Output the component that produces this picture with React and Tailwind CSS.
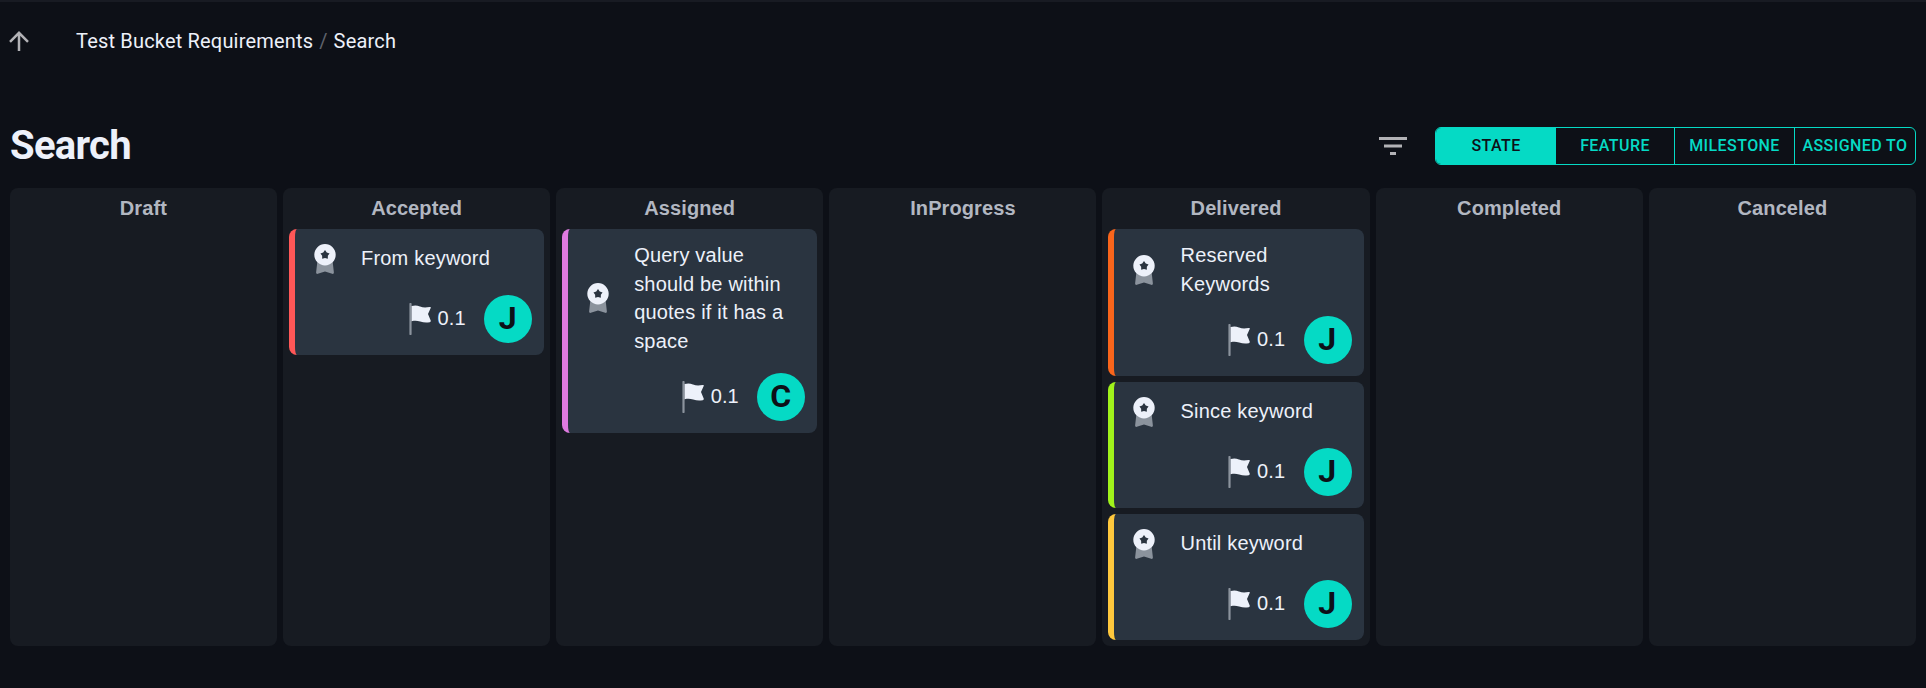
const COLUMNS = [
  { title: "Draft", cards: [] },
  { title: "Accepted", cards: [{ text: "From keyword", who: "J", border: "border-[#ff5757]" }] },
  { title: "Assigned", cards: [{ text: "Query value should be within quotes if it has a space", who: "C", border: "border-[#df7ae0]" }] },
  { title: "InProgress", cards: [] },
  {
    title: "Delivered",
    cards: [
      { text: "Reserved Keywords", who: "J", border: "border-[#f9651b]" },
      { text: "Since keyword", who: "J", border: "border-[#a0f31b]" },
      { text: "Until keyword", who: "J", border: "border-[#ffc83d]" },
    ],
  },
  { title: "Completed", cards: [] },
  { title: "Canceled", cards: [] },
];

function MedalIcon() {
  return (
    <svg viewBox="0 0 36 36" className="size-9 shrink-0" fill="none">
      <path d="M10.300 21L9.100 31.500q0 1.700 1.700 1.300L18 30.600l7.200 2.200q1.700.4 1.700-1.300L25.700 21z" fill="#8b939d" />
      <path
        fillRule="evenodd"
        d="M18 3a10.700 10.700 0 1 0 0 21.400A10.700 10.700 0 0 0 18 3zM18 9.100L19.760 11.470L22.560 12.420L20.850 14.830L20.820 17.780L18 16.900L15.180 17.780L15.150 14.830L13.440 12.420L16.240 11.470z"
        fill="#edf1fa"
      />
    </svg>
  );
}

function FlagIcon() {
  return (
    <svg viewBox="0 0 22 32" className="h-8 w-[22px] shrink-0" fill="none">
      <path d="M1.500 1v30" stroke="#8b939d" strokeWidth="2.200" strokeLinecap="round" />
      <path d="M2.600 3C6 2.200 8 2.300 11 3.600s6 1.200 9.800.5q1.500-.3.900 1L19 11l2.700 6.500q.4 1.500-1 1.700c-4 .4-6.500.2-9.500-.7s-5.400-1-8.600-.3z" fill="#edf1fa" />
    </svg>
  );
}

function Card({ text, who, border }) {
  return (
    <div className={`flex flex-col gap-[18px] rounded-lg border-l-[6px] bg-[#2a3440] p-3 ${border}`}>
      <div className="flex min-h-9 items-center">
        <MedalIcon />
        <p className="ml-[18px] min-h-[31px] flex-1 pr-3 text-[20px] leading-[28.6px] tracking-[0.2px]">{text}</p>
      </div>
      <div className="flex items-center justify-end">
        <FlagIcon />
        <span className="ml-[7px] mr-[18.5px] pb-[2px] text-[20px] leading-7 tracking-[0.1px]">0.1</span>
        <span className="flex size-12 items-center justify-center rounded-full bg-[#05dac5] pb-[2px] pr-px font-[Roboto,sans-serif] text-[32px] font-bold leading-none text-[#0d1017]">
          {who}
        </span>
      </div>
    </div>
  );
}

export default function App() {
  return (
    <div className="flex h-[688px] flex-col overflow-hidden border-t-2 border-[#181b23] bg-[#0d1017] px-[10px] font-['Liberation_Sans',Arial,sans-serif] text-[#edf1fa]">
      <nav className="flex h-[78px] items-center font-[Roboto,sans-serif] text-[20px] tracking-[0.18px]">
        <svg viewBox="0 0 20 20" className="-ml-px size-5" fill="none" stroke="#b2b2b6" strokeWidth="2.500">
          <path d="M10 20V2M1 10.800l9-9 9 9" />
        </svg>
        <span className="ml-[47px]">Test Bucket Requirements</span>
        <span className="mx-[6px] text-[#5f636c]">/</span>
        <span>Search</span>
      </nav>
      <header className="flex h-[108px] items-center pt-[24px]">
        <h1 className="font-[Roboto,sans-serif] text-[40px] font-bold leading-none tracking-[-0.7px]">Search</h1>
        <svg viewBox="0 0 28 18" className="ml-auto mr-[28px] h-[18px] w-7" fill="#b2b2b6">
          <path d="M0 0h28v3H0zM5 7.500h18v3H5zM11 15h6v3h-6z" />
        </svg>
        <div className="flex h-[38px] w-[481px] overflow-hidden rounded-md border border-[#05dac5] font-[Roboto,sans-serif] text-[16px] font-medium tracking-[0.42px] text-[#05dac5]">
          <button className="w-[120px] bg-[#05dac5] text-[#0d1017]">STATE</button>
          <button className="w-[119px] border-r border-[#05dac5]">FEATURE</button>
          <button className="w-[120px] border-r border-[#05dac5]">MILESTONE</button>
          <button className="flex-1 whitespace-nowrap">ASSIGNED TO</button>
        </div>
      </header>
      <main className="-ml-[0.2px] grid h-[458px] shrink-0 grid-cols-7 gap-[6px]">
        {COLUMNS.map((c) => (
          <section key={c.title} className="flex min-w-0 flex-col gap-[6px] rounded-lg bg-[#171b22] px-[6px]">
            <h2 className="h-[35px] shrink-0 pt-[6px] text-center text-[20px] font-bold leading-7 tracking-[0.1px] text-[#b2b7c1]">{c.title}</h2>
            {c.cards.map((card) => (
              <Card key={card.text} {...card} />
            ))}
          </section>
        ))}
      </main>
    </div>
  );
}
